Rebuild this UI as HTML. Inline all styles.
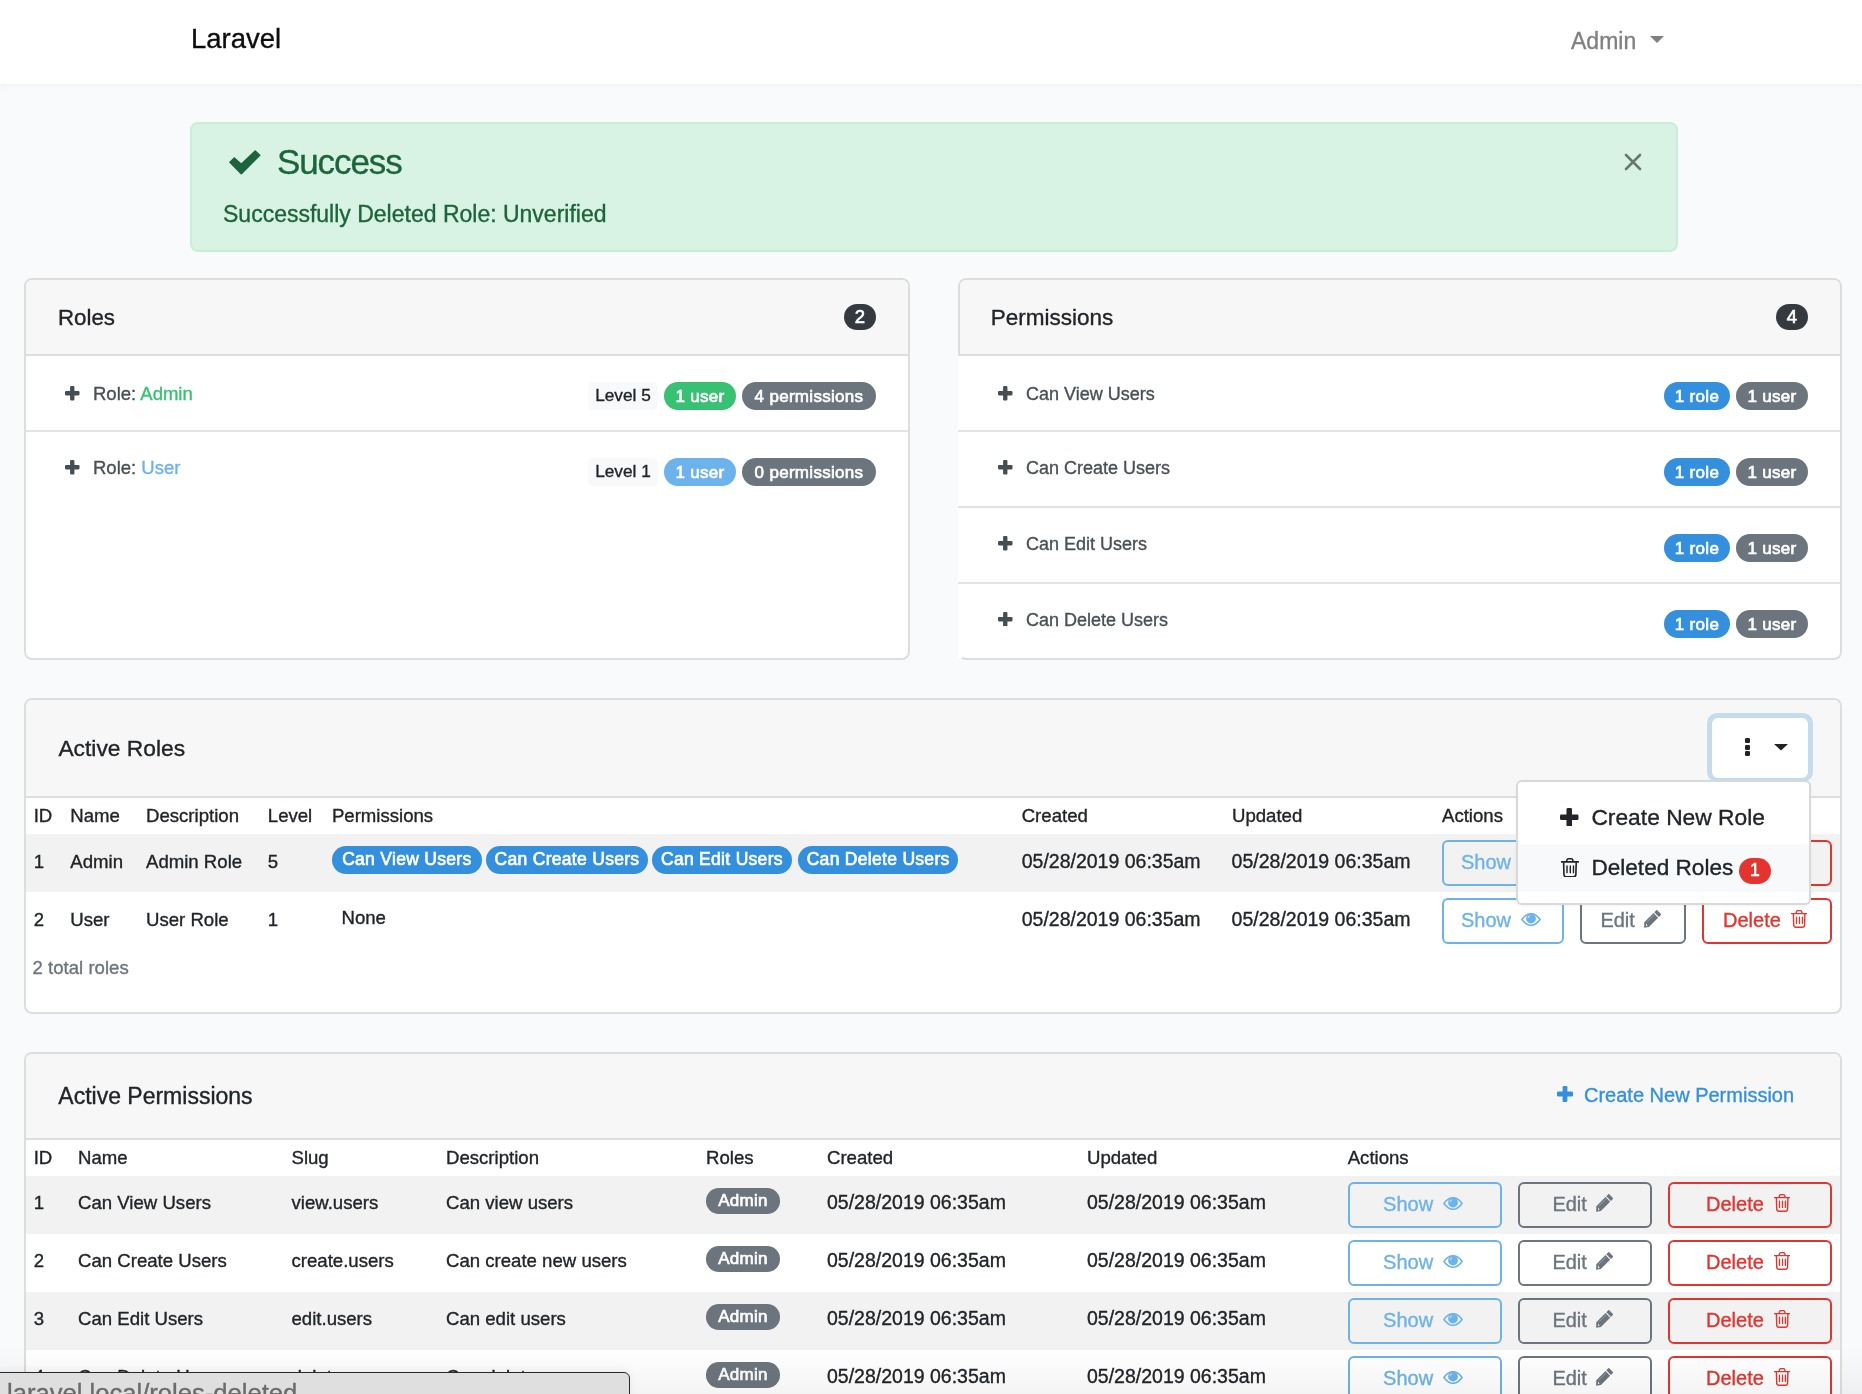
<!DOCTYPE html>
<html><head><meta charset="utf-8"><title>Laravel</title>
<style>
html,body{margin:0;padding:0;}
body{width:1862px;height:1394px;overflow:hidden;position:relative;background:#f8fafc;font-family:"Liberation Sans", sans-serif;}
.t{position:absolute;line-height:1;white-space:nowrap;-webkit-text-stroke:0.35px currentColor;}
#root{position:absolute;left:0;top:0;width:1862px;height:1394px;will-change:transform;}
.b{position:absolute;}
.cb{position:absolute;display:flex;align-items:center;justify-content:center;line-height:1;white-space:nowrap;box-sizing:border-box;}
</style></head><body><div id="root">
<div class="b" style="left:0.0px;top:0.0px;width:1862.0px;height:84.0px;background:#fff;box-shadow:0 2px 4px rgba(0,0,0,.04);"></div><div class="t" style="left:191.0px;top:24.7px;font-size:27.5px;color:#0d0d0d;font-weight:400;">Laravel</div><div class="t" style="left:1571.0px;top:29.5px;font-size:23px;color:#808080;font-weight:400;">Admin</div><svg class="b" style="left:1650.0px;top:36.0px;" width="14" height="7" viewBox="0 0 14 7"><path d="M0 0 H14 L7.0 7 Z" fill="#808080"/></svg><div class="b" style="left:190.0px;top:122.0px;width:1488.0px;height:130.0px;background:#d8f3e4;border:2px solid #c6eed8;border-radius:8px;box-sizing:border-box;"></div><svg class="b" style="left:228.0px;top:149.0px;" width="34" height="27" viewBox="0 0 34 27"><path d="M6.3 9.1 L13.3 15.3 L27.2 2 L31.7 6.3 L13.3 24.6 L2 13.3 Z" fill="#1d643b" stroke="#1d643b" stroke-width="1.6" stroke-linejoin="round"/></svg><div class="t" style="left:277.0px;top:144.4px;font-size:35px;color:#1d643b;font-weight:400;letter-spacing:-1.1px;">Success</div><div class="t" style="left:223.0px;top:202.5px;font-size:23px;color:#1d643b;font-weight:400;">Successfully Deleted Role: Unverified</div><svg class="b" style="left:1624.0px;top:153.0px;" width="18" height="18" viewBox="0 0 18 18"><path d="M2 2 L16 16 M16 2 L2 16" stroke="#69786f" stroke-width="2.6" stroke-linecap="round"/></svg><div class="b" style="left:24.0px;top:278.0px;width:886.0px;height:382.0px;background:#fff;border:2px solid #dcdddd;border-radius:8px;box-sizing:border-box;overflow:hidden;"><div style="position:absolute;left:0;top:0;right:0;height:74px;background:#f7f7f7;border-bottom:2px solid #dcdddd;"></div><div style="position:absolute;left:0;top:149.5px;right:0;height:2px;background:#e3e3e3;"></div></div><div class="t" style="left:58.0px;top:306.8px;font-size:22.3px;color:#212529;font-weight:400;">Roles</div><div class="cb" style="left:844.0px;top:304.0px;width:32.0px;height:26.0px;background:#343a40;color:#fff;border-radius:13.0px;font-size:18.54px;font-weight:400;-webkit-text-stroke:0.65px currentColor;letter-spacing:0.3px;">2</div><svg class="b" style="left:65.0px;top:386.0px;" width="14.5" height="14.5" viewBox="0 0 14.5 14.5"><rect x="5.08" y="0" width="4.35" height="14.5" rx="1.09" fill="#454d55"/><rect x="0" y="5.08" width="14.5" height="4.35" rx="1.09" fill="#454d55"/></svg><div class="t" style="left:93.0px;top:384.6px;font-size:18.5px;color:#495057;font-weight:400;">Role: <span style="color:#38c172">Admin</span></div><div class="cb" style="left:588.0px;top:382.0px;width:70.0px;height:28.0px;background:#f8f9fa;color:#212529;border-radius:5px;font-size:17.3px;font-weight:400;-webkit-text-stroke:0.35px currentColor;">Level 5</div><div class="cb" style="left:664.0px;top:382.0px;width:72.0px;height:28.0px;background:#38c172;color:#fff;border-radius:14.0px;font-size:17.00px;font-weight:400;-webkit-text-stroke:0.65px currentColor;letter-spacing:0.3px;">1 user</div><div class="cb" style="left:742.0px;top:382.0px;width:134.0px;height:28.0px;background:#6c757d;color:#fff;border-radius:14.0px;font-size:17.00px;font-weight:400;-webkit-text-stroke:0.65px currentColor;letter-spacing:0.3px;">4 permissions</div><svg class="b" style="left:65.0px;top:460.0px;" width="14.5" height="14.5" viewBox="0 0 14.5 14.5"><rect x="5.08" y="0" width="4.35" height="14.5" rx="1.09" fill="#454d55"/><rect x="0" y="5.08" width="14.5" height="4.35" rx="1.09" fill="#454d55"/></svg><div class="t" style="left:93.0px;top:458.6px;font-size:18.5px;color:#495057;font-weight:400;">Role: <span style="color:#6cb2eb">User</span></div><div class="cb" style="left:588.0px;top:458.0px;width:70.0px;height:28.0px;background:#f8f9fa;color:#212529;border-radius:5px;font-size:17.3px;font-weight:400;-webkit-text-stroke:0.35px currentColor;">Level 1</div><div class="cb" style="left:664.0px;top:458.0px;width:72.0px;height:28.0px;background:#6cb2eb;color:#fff;border-radius:14.0px;font-size:17.00px;font-weight:400;-webkit-text-stroke:0.65px currentColor;letter-spacing:0.3px;">1 user</div><div class="cb" style="left:742.0px;top:458.0px;width:134.0px;height:28.0px;background:#6c757d;color:#fff;border-radius:14.0px;font-size:17.00px;font-weight:400;-webkit-text-stroke:0.65px currentColor;letter-spacing:0.3px;">0 permissions</div><div class="b" style="left:958.0px;top:278.0px;width:884.0px;height:382.0px;background:#fff;border:2px solid #dcdddd;border-radius:8px;box-sizing:border-box;overflow:hidden;"><div style="position:absolute;left:0;top:0;right:0;height:74px;background:#f7f7f7;border-bottom:2px solid #dcdddd;"></div></div><div class="b" style="left:958.0px;top:356.0px;width:4.0px;height:302.0px;background:#fff;"></div><div class="t" style="left:990.8px;top:306.7px;font-size:22.5px;color:#212529;font-weight:400;">Permissions</div><div class="cb" style="left:1776.0px;top:304.0px;width:32.0px;height:26.0px;background:#343a40;color:#fff;border-radius:13.0px;font-size:18.54px;font-weight:400;-webkit-text-stroke:0.65px currentColor;letter-spacing:0.3px;">4</div><svg class="b" style="left:998.0px;top:386.0px;" width="14.5" height="14.5" viewBox="0 0 14.5 14.5"><rect x="5.08" y="0" width="4.35" height="14.5" rx="1.09" fill="#454d55"/><rect x="0" y="5.08" width="14.5" height="4.35" rx="1.09" fill="#454d55"/></svg><div class="t" style="left:1026.0px;top:385.1px;font-size:18px;color:#495057;font-weight:400;">Can View Users</div><div class="cb" style="left:1664.0px;top:382.0px;width:66.0px;height:28.0px;background:#3490dc;color:#fff;border-radius:14.0px;font-size:17.00px;font-weight:400;-webkit-text-stroke:0.65px currentColor;letter-spacing:0.3px;">1 role</div><div class="cb" style="left:1736.0px;top:382.0px;width:72.0px;height:28.0px;background:#6c757d;color:#fff;border-radius:14.0px;font-size:17.00px;font-weight:400;-webkit-text-stroke:0.65px currentColor;letter-spacing:0.3px;">1 user</div><div class="b" style="left:958.0px;top:430.0px;width:882.0px;height:2.0px;background:#e3e3e3;"></div><svg class="b" style="left:998.0px;top:460.0px;" width="14.5" height="14.5" viewBox="0 0 14.5 14.5"><rect x="5.08" y="0" width="4.35" height="14.5" rx="1.09" fill="#454d55"/><rect x="0" y="5.08" width="14.5" height="4.35" rx="1.09" fill="#454d55"/></svg><div class="t" style="left:1026.0px;top:459.1px;font-size:18px;color:#495057;font-weight:400;">Can Create Users</div><div class="cb" style="left:1664.0px;top:458.0px;width:66.0px;height:28.0px;background:#3490dc;color:#fff;border-radius:14.0px;font-size:17.00px;font-weight:400;-webkit-text-stroke:0.65px currentColor;letter-spacing:0.3px;">1 role</div><div class="cb" style="left:1736.0px;top:458.0px;width:72.0px;height:28.0px;background:#6c757d;color:#fff;border-radius:14.0px;font-size:17.00px;font-weight:400;-webkit-text-stroke:0.65px currentColor;letter-spacing:0.3px;">1 user</div><div class="b" style="left:958.0px;top:506.0px;width:882.0px;height:2.0px;background:#e3e3e3;"></div><svg class="b" style="left:998.0px;top:536.0px;" width="14.5" height="14.5" viewBox="0 0 14.5 14.5"><rect x="5.08" y="0" width="4.35" height="14.5" rx="1.09" fill="#454d55"/><rect x="0" y="5.08" width="14.5" height="4.35" rx="1.09" fill="#454d55"/></svg><div class="t" style="left:1026.0px;top:535.1px;font-size:18px;color:#495057;font-weight:400;">Can Edit Users</div><div class="cb" style="left:1664.0px;top:534.0px;width:66.0px;height:28.0px;background:#3490dc;color:#fff;border-radius:14.0px;font-size:17.00px;font-weight:400;-webkit-text-stroke:0.65px currentColor;letter-spacing:0.3px;">1 role</div><div class="cb" style="left:1736.0px;top:534.0px;width:72.0px;height:28.0px;background:#6c757d;color:#fff;border-radius:14.0px;font-size:17.00px;font-weight:400;-webkit-text-stroke:0.65px currentColor;letter-spacing:0.3px;">1 user</div><div class="b" style="left:958.0px;top:582.0px;width:882.0px;height:2.0px;background:#e3e3e3;"></div><svg class="b" style="left:998.0px;top:611.7px;" width="14.5" height="14.5" viewBox="0 0 14.5 14.5"><rect x="5.08" y="0" width="4.35" height="14.5" rx="1.09" fill="#454d55"/><rect x="0" y="5.08" width="14.5" height="4.35" rx="1.09" fill="#454d55"/></svg><div class="t" style="left:1026.0px;top:610.8px;font-size:18px;color:#495057;font-weight:400;">Can Delete Users</div><div class="cb" style="left:1664.0px;top:610.0px;width:66.0px;height:28.0px;background:#3490dc;color:#fff;border-radius:14.0px;font-size:17.00px;font-weight:400;-webkit-text-stroke:0.65px currentColor;letter-spacing:0.3px;">1 role</div><div class="cb" style="left:1736.0px;top:610.0px;width:72.0px;height:28.0px;background:#6c757d;color:#fff;border-radius:14.0px;font-size:17.00px;font-weight:400;-webkit-text-stroke:0.65px currentColor;letter-spacing:0.3px;">1 user</div><div class="b" style="left:24.0px;top:698.0px;width:1818.0px;height:316.0px;background:#fff;border:2px solid #dcdddd;border-radius:8px;box-sizing:border-box;overflow:hidden;"><div style="position:absolute;left:0;top:0;right:0;height:96px;background:#f7f7f7;border-bottom:2px solid #dcdddd;"></div><div style="position:absolute;left:0;top:134px;right:0;height:58px;background:#f2f2f2;"></div></div><div class="t" style="left:58.4px;top:736.7px;font-size:22.8px;color:#212529;font-weight:400;">Active Roles</div><div class="t" style="left:33.7px;top:806.6px;font-size:18.6px;color:#212529;font-weight:400;">ID</div><div class="t" style="left:70.3px;top:806.6px;font-size:18.6px;color:#212529;font-weight:400;">Name</div><div class="t" style="left:146.0px;top:806.6px;font-size:18.6px;color:#212529;font-weight:400;">Description</div><div class="t" style="left:267.8px;top:806.6px;font-size:18.6px;color:#212529;font-weight:400;">Level</div><div class="t" style="left:331.9px;top:806.6px;font-size:18.6px;color:#212529;font-weight:400;">Permissions</div><div class="t" style="left:1021.7px;top:806.6px;font-size:18.6px;color:#212529;font-weight:400;">Created</div><div class="t" style="left:1232.0px;top:806.6px;font-size:18.6px;color:#212529;font-weight:400;">Updated</div><div class="t" style="left:1442.0px;top:806.6px;font-size:18.6px;color:#212529;font-weight:400;">Actions</div><div class="t" style="left:33.7px;top:852.5px;font-size:18.6px;color:#212529;font-weight:400;">1</div><div class="t" style="left:70.3px;top:852.5px;font-size:18.6px;color:#212529;font-weight:400;">Admin</div><div class="t" style="left:146.0px;top:852.5px;font-size:18.6px;color:#212529;font-weight:400;">Admin Role</div><div class="t" style="left:267.8px;top:852.5px;font-size:18.6px;color:#212529;font-weight:400;">5</div><div class="t" style="left:1021.7px;top:851.7px;font-size:19.5px;color:#212529;font-weight:400;">05/28/2019 06:35am</div><div class="t" style="left:1231.6px;top:851.7px;font-size:19.5px;color:#212529;font-weight:400;">05/28/2019 06:35am</div><div class="b" style="left:1442.3px;top:840.0px;width:121.4px;height:45.5px;border:2px solid #6cb2eb;border-radius:6px;box-sizing:border-box;"></div><div class="t" style="left:1461.0px;top:851.6px;font-size:20px;color:#6cb2eb;font-weight:400;">Show</div><svg class="b" style="left:1521.0px;top:854.5px;" width="20" height="13" viewBox="0 0 20 13"><path d="M0.9 6.5 C4.2 1.9 7 0.7 10 0.7 C13 0.7 15.8 1.9 19.1 6.5 C15.8 11.1 13 12.3 10 12.3 C7 12.3 4.2 11.1 0.9 6.5 Z" fill="none" stroke="#6cb2eb" stroke-width="1.5"/><circle cx="10" cy="5.6" r="4.9" fill="#6cb2eb"/><path d="M6.9 5.2 Q7.3 3.2 9.2 2.8" stroke="#fff" stroke-width="0.9" fill="none" opacity="0.85"/></svg><div class="b" style="left:1580.0px;top:840.0px;width:105.8px;height:45.5px;border:2px solid #6c757d;border-radius:6px;box-sizing:border-box;"></div><div class="t" style="left:1600.4px;top:851.6px;font-size:20px;color:#6c757d;font-weight:400;">Edit</div><svg class="b" style="left:1643.8px;top:851.7px;" width="17" height="18" viewBox="0 0 17 18"><path d="M10.3 2.3 L12.3 0.3 Q12.8 -0.2 13.3 0.3 L16.9 3.9 Q17.4 4.4 16.9 4.9 L14.9 6.9 Z" fill="#6c757d"/><path d="M9.5 3.1 L14.1 7.7 L4.9 16.9 L0.1 17.8 L0.3 12.3 Z" fill="#6c757d"/><path d="M1.8 13.6 L3.6 15.4 L2.3 16.2 Z" fill="#f2f2f2"/><path d="M2.6 12.2 L9.8 5" stroke="#f2f2f2" stroke-width="0.5" opacity="0.6"/></svg><div class="b" style="left:1702.2px;top:840.0px;width:129.5px;height:45.5px;border:2px solid #e3342f;border-radius:6px;box-sizing:border-box;"></div><div class="t" style="left:1723.0px;top:851.6px;font-size:20px;color:#e3342f;font-weight:400;">Delete</div><svg class="b" style="left:1790.5px;top:851.9px;" width="16" height="18" viewBox="0 0 16 18"><path d="M0.4 3.6 H15.8" stroke="#e3342f" stroke-width="1.4" fill="none" stroke-linecap="round"/><path d="M5 3.5 L5.5 1.6 Q5.8 0.7 6.8 0.7 H9.4 Q10.4 0.7 10.7 1.6 L11.2 3.5" stroke="#e3342f" stroke-width="1.33" fill="none"/><path d="M2.4 3.8 L2.7 15 Q2.8 17.2 5 17.2 H11.3 Q13.5 17.2 13.6 15 L13.9 3.8" stroke="#e3342f" stroke-width="1.4" fill="none"/><path d="M5.5 7.2 V13.4 M8.5 7.2 V13.4 M11.4 7.2 V13.4" stroke="#e3342f" stroke-width="1.3" fill="none" stroke-linecap="round"/></svg><div class="t" style="left:33.7px;top:910.5px;font-size:18.6px;color:#212529;font-weight:400;">2</div><div class="t" style="left:70.3px;top:910.5px;font-size:18.6px;color:#212529;font-weight:400;">User</div><div class="t" style="left:146.0px;top:910.5px;font-size:18.6px;color:#212529;font-weight:400;">User Role</div><div class="t" style="left:267.8px;top:910.5px;font-size:18.6px;color:#212529;font-weight:400;">1</div><div class="t" style="left:1021.7px;top:909.7px;font-size:19.5px;color:#212529;font-weight:400;">05/28/2019 06:35am</div><div class="t" style="left:1231.6px;top:909.7px;font-size:19.5px;color:#212529;font-weight:400;">05/28/2019 06:35am</div><div class="b" style="left:1442.3px;top:898.0px;width:121.4px;height:45.5px;border:2px solid #6cb2eb;border-radius:6px;box-sizing:border-box;"></div><div class="t" style="left:1461.0px;top:909.6px;font-size:20px;color:#6cb2eb;font-weight:400;">Show</div><svg class="b" style="left:1521.0px;top:912.5px;" width="20" height="13" viewBox="0 0 20 13"><path d="M0.9 6.5 C4.2 1.9 7 0.7 10 0.7 C13 0.7 15.8 1.9 19.1 6.5 C15.8 11.1 13 12.3 10 12.3 C7 12.3 4.2 11.1 0.9 6.5 Z" fill="none" stroke="#6cb2eb" stroke-width="1.5"/><circle cx="10" cy="5.6" r="4.9" fill="#6cb2eb"/><path d="M6.9 5.2 Q7.3 3.2 9.2 2.8" stroke="#fff" stroke-width="0.9" fill="none" opacity="0.85"/></svg><div class="b" style="left:1580.0px;top:898.0px;width:105.8px;height:45.5px;border:2px solid #6c757d;border-radius:6px;box-sizing:border-box;"></div><div class="t" style="left:1600.4px;top:909.6px;font-size:20px;color:#6c757d;font-weight:400;">Edit</div><svg class="b" style="left:1643.8px;top:909.7px;" width="17" height="18" viewBox="0 0 17 18"><path d="M10.3 2.3 L12.3 0.3 Q12.8 -0.2 13.3 0.3 L16.9 3.9 Q17.4 4.4 16.9 4.9 L14.9 6.9 Z" fill="#6c757d"/><path d="M9.5 3.1 L14.1 7.7 L4.9 16.9 L0.1 17.8 L0.3 12.3 Z" fill="#6c757d"/><path d="M1.8 13.6 L3.6 15.4 L2.3 16.2 Z" fill="#fff"/><path d="M2.6 12.2 L9.8 5" stroke="#fff" stroke-width="0.5" opacity="0.6"/></svg><div class="b" style="left:1702.2px;top:898.0px;width:129.5px;height:45.5px;border:2px solid #e3342f;border-radius:6px;box-sizing:border-box;"></div><div class="t" style="left:1723.0px;top:909.6px;font-size:20px;color:#e3342f;font-weight:400;">Delete</div><svg class="b" style="left:1790.5px;top:909.9px;" width="16" height="18" viewBox="0 0 16 18"><path d="M0.4 3.6 H15.8" stroke="#e3342f" stroke-width="1.4" fill="none" stroke-linecap="round"/><path d="M5 3.5 L5.5 1.6 Q5.8 0.7 6.8 0.7 H9.4 Q10.4 0.7 10.7 1.6 L11.2 3.5" stroke="#e3342f" stroke-width="1.33" fill="none"/><path d="M2.4 3.8 L2.7 15 Q2.8 17.2 5 17.2 H11.3 Q13.5 17.2 13.6 15 L13.9 3.8" stroke="#e3342f" stroke-width="1.4" fill="none"/><path d="M5.5 7.2 V13.4 M8.5 7.2 V13.4 M11.4 7.2 V13.4" stroke="#e3342f" stroke-width="1.3" fill="none" stroke-linecap="round"/></svg><div class="cb" style="left:332.0px;top:846.0px;width:149.6px;height:28.0px;background:#3490dc;color:#fff;border-radius:14.0px;font-size:17.51px;font-weight:400;-webkit-text-stroke:0.65px currentColor;letter-spacing:0.3px;">Can View Users</div><div class="cb" style="left:486.2px;top:846.0px;width:161.6px;height:28.0px;background:#3490dc;color:#fff;border-radius:14.0px;font-size:17.51px;font-weight:400;-webkit-text-stroke:0.65px currentColor;letter-spacing:0.3px;">Can Create Users</div><div class="cb" style="left:652.0px;top:846.0px;width:139.8px;height:28.0px;background:#3490dc;color:#fff;border-radius:14.0px;font-size:17.51px;font-weight:400;-webkit-text-stroke:0.65px currentColor;letter-spacing:0.3px;">Can Edit Users</div><div class="cb" style="left:798.2px;top:846.0px;width:159.9px;height:28.0px;background:#3490dc;color:#fff;border-radius:14.0px;font-size:17.51px;font-weight:400;-webkit-text-stroke:0.65px currentColor;letter-spacing:0.3px;">Can Delete Users</div><div class="t" style="left:341.5px;top:909.3px;font-size:18.6px;color:#212529;font-weight:400;">None</div><div class="t" style="left:32.6px;top:958.5px;font-size:18.6px;color:#6c757d;font-weight:400;">2 total roles</div><div class="b" style="left:1707.0px;top:713.0px;width:106.0px;height:69.0px;background:#c5dbee;border-radius:10px;"></div><div class="b" style="left:1712.0px;top:717.7px;width:96.0px;height:60.5px;background:#fff;border-radius:6px;"></div><div class="b" style="left:1744.7px;top:738.0px;width:5.2px;height:5.2px;background:#222;border-radius:1.2px;"></div><div class="b" style="left:1744.7px;top:744.6px;width:5.2px;height:5.2px;background:#222;border-radius:1.2px;"></div><div class="b" style="left:1744.7px;top:751.2px;width:5.2px;height:5.2px;background:#222;border-radius:1.2px;"></div><svg class="b" style="left:1774.2px;top:744.0px;" width="14" height="6.5" viewBox="0 0 14 6.5"><path d="M0 0 H14 L7.0 6.5 Z" fill="#222"/></svg><div class="b" style="left:1516.0px;top:780.0px;width:294.5px;height:124.5px;background:#fff;border:2px solid rgba(0,0,0,.15);border-radius:6px;box-sizing:border-box;box-shadow:0 1px 3px rgba(0,0,0,.05);overflow:hidden;"><div style="position:absolute;left:0;right:0;top:61.5px;height:48px;background:#f8f9fa;"></div></div><svg class="b" style="left:1560.0px;top:807.5px;" width="18.5" height="18.5" viewBox="0 0 18.5 18.5"><rect x="6.47" y="0" width="5.55" height="18.5" rx="1.39" fill="#212529"/><rect x="0" y="6.47" width="18.5" height="5.55" rx="1.39" fill="#212529"/></svg><div class="t" style="left:1591.4px;top:806.3px;font-size:22.8px;color:#212529;font-weight:400;">Create New Role</div><svg class="b" style="left:1561.0px;top:857.5px;" width="17.5" height="19.7" viewBox="0 0 16 18"><path d="M0.4 3.6 H15.8" stroke="#212529" stroke-width="1.5" fill="none" stroke-linecap="round"/><path d="M5 3.5 L5.5 1.6 Q5.8 0.7 6.8 0.7 H9.4 Q10.4 0.7 10.7 1.6 L11.2 3.5" stroke="#212529" stroke-width="1.42" fill="none"/><path d="M2.4 3.8 L2.7 15 Q2.8 17.2 5 17.2 H11.3 Q13.5 17.2 13.6 15 L13.9 3.8" stroke="#212529" stroke-width="1.5" fill="none"/><path d="M5.5 7.2 V13.4 M8.5 7.2 V13.4 M11.4 7.2 V13.4" stroke="#212529" stroke-width="1.3" fill="none" stroke-linecap="round"/></svg><div class="t" style="left:1591.4px;top:856.7px;font-size:22.6px;color:#212529;font-weight:400;">Deleted Roles</div><div class="cb" style="left:1739.0px;top:858.0px;width:32.0px;height:26.0px;background:#e3342f;color:#fff;border-radius:13.0px;font-size:17.51px;font-weight:400;-webkit-text-stroke:0.65px currentColor;letter-spacing:0.3px;">1</div><div class="b" style="left:24.0px;top:1052.0px;width:1818.0px;height:448.0px;background:#fff;border:2px solid #dcdddd;border-radius:8px;box-sizing:border-box;overflow:hidden;"><div style="position:absolute;left:0;top:0;right:0;height:84px;background:#f7f7f7;border-bottom:2px solid #dcdddd;"></div><div style="position:absolute;left:0;top:122px;right:0;height:58px;background:#f2f2f2;"></div><div style="position:absolute;left:0;top:238px;right:0;height:58px;background:#f2f2f2;"></div></div><div class="t" style="left:58.3px;top:1085.3px;font-size:23px;color:#212529;font-weight:400;">Active Permissions</div><svg class="b" style="left:1557.0px;top:1086.3px;" width="16" height="16" viewBox="0 0 16 16"><rect x="5.60" y="0" width="4.80" height="16" rx="1.20" fill="#3490dc"/><rect x="0" y="5.60" width="16" height="4.80" rx="1.20" fill="#3490dc"/></svg><div class="t" style="left:1584.0px;top:1085.1px;font-size:20px;color:#3490dc;font-weight:400;">Create New Permission</div><div class="t" style="left:33.7px;top:1148.8px;font-size:18.6px;color:#212529;font-weight:400;">ID</div><div class="t" style="left:78.0px;top:1148.8px;font-size:18.6px;color:#212529;font-weight:400;">Name</div><div class="t" style="left:291.5px;top:1148.8px;font-size:18.6px;color:#212529;font-weight:400;">Slug</div><div class="t" style="left:446.0px;top:1148.8px;font-size:18.6px;color:#212529;font-weight:400;">Description</div><div class="t" style="left:706.0px;top:1148.8px;font-size:18.6px;color:#212529;font-weight:400;">Roles</div><div class="t" style="left:827.0px;top:1148.8px;font-size:18.6px;color:#212529;font-weight:400;">Created</div><div class="t" style="left:1087.0px;top:1148.8px;font-size:18.6px;color:#212529;font-weight:400;">Updated</div><div class="t" style="left:1347.7px;top:1148.8px;font-size:18.6px;color:#212529;font-weight:400;">Actions</div><div class="t" style="left:33.7px;top:1194.1px;font-size:18.6px;color:#212529;font-weight:400;">1</div><div class="t" style="left:78.0px;top:1194.1px;font-size:18.6px;color:#212529;font-weight:400;">Can View Users</div><div class="t" style="left:291.5px;top:1194.1px;font-size:18.6px;color:#212529;font-weight:400;">view.users</div><div class="t" style="left:446.0px;top:1194.1px;font-size:18.6px;color:#212529;font-weight:400;">Can view users</div><div class="cb" style="left:706.0px;top:1188.0px;width:74.0px;height:25.6px;background:#6c757d;color:#fff;border-radius:12.799999999999955px;font-size:17.00px;font-weight:400;-webkit-text-stroke:0.65px currentColor;letter-spacing:0.3px;">Admin</div><div class="t" style="left:827.0px;top:1193.3px;font-size:19.5px;color:#212529;font-weight:400;">05/28/2019 06:35am</div><div class="t" style="left:1087.0px;top:1193.3px;font-size:19.5px;color:#212529;font-weight:400;">05/28/2019 06:35am</div><div class="b" style="left:1348.2px;top:1182.2px;width:153.7px;height:45.5px;border:2px solid #6cb2eb;border-radius:6px;box-sizing:border-box;"></div><div class="t" style="left:1383.1px;top:1193.7px;font-size:20px;color:#6cb2eb;font-weight:400;">Show</div><svg class="b" style="left:1443.1px;top:1196.6px;" width="20" height="13" viewBox="0 0 20 13"><path d="M0.9 6.5 C4.2 1.9 7 0.7 10 0.7 C13 0.7 15.8 1.9 19.1 6.5 C15.8 11.1 13 12.3 10 12.3 C7 12.3 4.2 11.1 0.9 6.5 Z" fill="none" stroke="#6cb2eb" stroke-width="1.5"/><circle cx="10" cy="5.6" r="4.9" fill="#6cb2eb"/><path d="M6.9 5.2 Q7.3 3.2 9.2 2.8" stroke="#fff" stroke-width="0.9" fill="none" opacity="0.85"/></svg><div class="b" style="left:1518.2px;top:1182.2px;width:133.4px;height:45.5px;border:2px solid #6c757d;border-radius:6px;box-sizing:border-box;"></div><div class="t" style="left:1552.4px;top:1193.7px;font-size:20px;color:#6c757d;font-weight:400;">Edit</div><svg class="b" style="left:1595.8px;top:1193.8px;" width="17" height="18" viewBox="0 0 17 18"><path d="M10.3 2.3 L12.3 0.3 Q12.8 -0.2 13.3 0.3 L16.9 3.9 Q17.4 4.4 16.9 4.9 L14.9 6.9 Z" fill="#6c757d"/><path d="M9.5 3.1 L14.1 7.7 L4.9 16.9 L0.1 17.8 L0.3 12.3 Z" fill="#6c757d"/><path d="M1.8 13.6 L3.6 15.4 L2.3 16.2 Z" fill="#f2f2f2"/><path d="M2.6 12.2 L9.8 5" stroke="#f2f2f2" stroke-width="0.5" opacity="0.6"/></svg><div class="b" style="left:1668.2px;top:1182.2px;width:163.5px;height:45.5px;border:2px solid #e3342f;border-radius:6px;box-sizing:border-box;"></div><div class="t" style="left:1706.0px;top:1193.7px;font-size:20px;color:#e3342f;font-weight:400;">Delete</div><svg class="b" style="left:1773.5px;top:1194.0px;" width="16" height="18" viewBox="0 0 16 18"><path d="M0.4 3.6 H15.8" stroke="#e3342f" stroke-width="1.4" fill="none" stroke-linecap="round"/><path d="M5 3.5 L5.5 1.6 Q5.8 0.7 6.8 0.7 H9.4 Q10.4 0.7 10.7 1.6 L11.2 3.5" stroke="#e3342f" stroke-width="1.33" fill="none"/><path d="M2.4 3.8 L2.7 15 Q2.8 17.2 5 17.2 H11.3 Q13.5 17.2 13.6 15 L13.9 3.8" stroke="#e3342f" stroke-width="1.4" fill="none"/><path d="M5.5 7.2 V13.4 M8.5 7.2 V13.4 M11.4 7.2 V13.4" stroke="#e3342f" stroke-width="1.3" fill="none" stroke-linecap="round"/></svg><div class="t" style="left:33.7px;top:1252.1px;font-size:18.6px;color:#212529;font-weight:400;">2</div><div class="t" style="left:78.0px;top:1252.1px;font-size:18.6px;color:#212529;font-weight:400;">Can Create Users</div><div class="t" style="left:291.5px;top:1252.1px;font-size:18.6px;color:#212529;font-weight:400;">create.users</div><div class="t" style="left:446.0px;top:1252.1px;font-size:18.6px;color:#212529;font-weight:400;">Can create new users</div><div class="cb" style="left:706.0px;top:1246.0px;width:74.0px;height:25.6px;background:#6c757d;color:#fff;border-radius:12.799999999999955px;font-size:17.00px;font-weight:400;-webkit-text-stroke:0.65px currentColor;letter-spacing:0.3px;">Admin</div><div class="t" style="left:827.0px;top:1251.3px;font-size:19.5px;color:#212529;font-weight:400;">05/28/2019 06:35am</div><div class="t" style="left:1087.0px;top:1251.3px;font-size:19.5px;color:#212529;font-weight:400;">05/28/2019 06:35am</div><div class="b" style="left:1348.2px;top:1240.2px;width:153.7px;height:45.5px;border:2px solid #6cb2eb;border-radius:6px;box-sizing:border-box;"></div><div class="t" style="left:1383.1px;top:1251.7px;font-size:20px;color:#6cb2eb;font-weight:400;">Show</div><svg class="b" style="left:1443.1px;top:1254.6px;" width="20" height="13" viewBox="0 0 20 13"><path d="M0.9 6.5 C4.2 1.9 7 0.7 10 0.7 C13 0.7 15.8 1.9 19.1 6.5 C15.8 11.1 13 12.3 10 12.3 C7 12.3 4.2 11.1 0.9 6.5 Z" fill="none" stroke="#6cb2eb" stroke-width="1.5"/><circle cx="10" cy="5.6" r="4.9" fill="#6cb2eb"/><path d="M6.9 5.2 Q7.3 3.2 9.2 2.8" stroke="#fff" stroke-width="0.9" fill="none" opacity="0.85"/></svg><div class="b" style="left:1518.2px;top:1240.2px;width:133.4px;height:45.5px;border:2px solid #6c757d;border-radius:6px;box-sizing:border-box;"></div><div class="t" style="left:1552.4px;top:1251.7px;font-size:20px;color:#6c757d;font-weight:400;">Edit</div><svg class="b" style="left:1595.8px;top:1251.8px;" width="17" height="18" viewBox="0 0 17 18"><path d="M10.3 2.3 L12.3 0.3 Q12.8 -0.2 13.3 0.3 L16.9 3.9 Q17.4 4.4 16.9 4.9 L14.9 6.9 Z" fill="#6c757d"/><path d="M9.5 3.1 L14.1 7.7 L4.9 16.9 L0.1 17.8 L0.3 12.3 Z" fill="#6c757d"/><path d="M1.8 13.6 L3.6 15.4 L2.3 16.2 Z" fill="#fff"/><path d="M2.6 12.2 L9.8 5" stroke="#fff" stroke-width="0.5" opacity="0.6"/></svg><div class="b" style="left:1668.2px;top:1240.2px;width:163.5px;height:45.5px;border:2px solid #e3342f;border-radius:6px;box-sizing:border-box;"></div><div class="t" style="left:1706.0px;top:1251.7px;font-size:20px;color:#e3342f;font-weight:400;">Delete</div><svg class="b" style="left:1773.5px;top:1252.0px;" width="16" height="18" viewBox="0 0 16 18"><path d="M0.4 3.6 H15.8" stroke="#e3342f" stroke-width="1.4" fill="none" stroke-linecap="round"/><path d="M5 3.5 L5.5 1.6 Q5.8 0.7 6.8 0.7 H9.4 Q10.4 0.7 10.7 1.6 L11.2 3.5" stroke="#e3342f" stroke-width="1.33" fill="none"/><path d="M2.4 3.8 L2.7 15 Q2.8 17.2 5 17.2 H11.3 Q13.5 17.2 13.6 15 L13.9 3.8" stroke="#e3342f" stroke-width="1.4" fill="none"/><path d="M5.5 7.2 V13.4 M8.5 7.2 V13.4 M11.4 7.2 V13.4" stroke="#e3342f" stroke-width="1.3" fill="none" stroke-linecap="round"/></svg><div class="t" style="left:33.7px;top:1310.1px;font-size:18.6px;color:#212529;font-weight:400;">3</div><div class="t" style="left:78.0px;top:1310.1px;font-size:18.6px;color:#212529;font-weight:400;">Can Edit Users</div><div class="t" style="left:291.5px;top:1310.1px;font-size:18.6px;color:#212529;font-weight:400;">edit.users</div><div class="t" style="left:446.0px;top:1310.1px;font-size:18.6px;color:#212529;font-weight:400;">Can edit users</div><div class="cb" style="left:706.0px;top:1304.0px;width:74.0px;height:25.6px;background:#6c757d;color:#fff;border-radius:12.799999999999955px;font-size:17.00px;font-weight:400;-webkit-text-stroke:0.65px currentColor;letter-spacing:0.3px;">Admin</div><div class="t" style="left:827.0px;top:1309.3px;font-size:19.5px;color:#212529;font-weight:400;">05/28/2019 06:35am</div><div class="t" style="left:1087.0px;top:1309.3px;font-size:19.5px;color:#212529;font-weight:400;">05/28/2019 06:35am</div><div class="b" style="left:1348.2px;top:1298.2px;width:153.7px;height:45.5px;border:2px solid #6cb2eb;border-radius:6px;box-sizing:border-box;"></div><div class="t" style="left:1383.1px;top:1309.7px;font-size:20px;color:#6cb2eb;font-weight:400;">Show</div><svg class="b" style="left:1443.1px;top:1312.6px;" width="20" height="13" viewBox="0 0 20 13"><path d="M0.9 6.5 C4.2 1.9 7 0.7 10 0.7 C13 0.7 15.8 1.9 19.1 6.5 C15.8 11.1 13 12.3 10 12.3 C7 12.3 4.2 11.1 0.9 6.5 Z" fill="none" stroke="#6cb2eb" stroke-width="1.5"/><circle cx="10" cy="5.6" r="4.9" fill="#6cb2eb"/><path d="M6.9 5.2 Q7.3 3.2 9.2 2.8" stroke="#fff" stroke-width="0.9" fill="none" opacity="0.85"/></svg><div class="b" style="left:1518.2px;top:1298.2px;width:133.4px;height:45.5px;border:2px solid #6c757d;border-radius:6px;box-sizing:border-box;"></div><div class="t" style="left:1552.4px;top:1309.7px;font-size:20px;color:#6c757d;font-weight:400;">Edit</div><svg class="b" style="left:1595.8px;top:1309.8px;" width="17" height="18" viewBox="0 0 17 18"><path d="M10.3 2.3 L12.3 0.3 Q12.8 -0.2 13.3 0.3 L16.9 3.9 Q17.4 4.4 16.9 4.9 L14.9 6.9 Z" fill="#6c757d"/><path d="M9.5 3.1 L14.1 7.7 L4.9 16.9 L0.1 17.8 L0.3 12.3 Z" fill="#6c757d"/><path d="M1.8 13.6 L3.6 15.4 L2.3 16.2 Z" fill="#f2f2f2"/><path d="M2.6 12.2 L9.8 5" stroke="#f2f2f2" stroke-width="0.5" opacity="0.6"/></svg><div class="b" style="left:1668.2px;top:1298.2px;width:163.5px;height:45.5px;border:2px solid #e3342f;border-radius:6px;box-sizing:border-box;"></div><div class="t" style="left:1706.0px;top:1309.7px;font-size:20px;color:#e3342f;font-weight:400;">Delete</div><svg class="b" style="left:1773.5px;top:1310.0px;" width="16" height="18" viewBox="0 0 16 18"><path d="M0.4 3.6 H15.8" stroke="#e3342f" stroke-width="1.4" fill="none" stroke-linecap="round"/><path d="M5 3.5 L5.5 1.6 Q5.8 0.7 6.8 0.7 H9.4 Q10.4 0.7 10.7 1.6 L11.2 3.5" stroke="#e3342f" stroke-width="1.33" fill="none"/><path d="M2.4 3.8 L2.7 15 Q2.8 17.2 5 17.2 H11.3 Q13.5 17.2 13.6 15 L13.9 3.8" stroke="#e3342f" stroke-width="1.4" fill="none"/><path d="M5.5 7.2 V13.4 M8.5 7.2 V13.4 M11.4 7.2 V13.4" stroke="#e3342f" stroke-width="1.3" fill="none" stroke-linecap="round"/></svg><div class="t" style="left:33.7px;top:1368.1px;font-size:18.6px;color:#212529;font-weight:400;">4</div><div class="t" style="left:78.0px;top:1368.1px;font-size:18.6px;color:#212529;font-weight:400;">Can Delete Users</div><div class="t" style="left:291.5px;top:1368.1px;font-size:18.6px;color:#212529;font-weight:400;">delete.users</div><div class="t" style="left:446.0px;top:1368.1px;font-size:18.6px;color:#212529;font-weight:400;">Can delete users</div><div class="cb" style="left:706.0px;top:1362.0px;width:74.0px;height:25.6px;background:#6c757d;color:#fff;border-radius:12.799999999999955px;font-size:17.00px;font-weight:400;-webkit-text-stroke:0.65px currentColor;letter-spacing:0.3px;">Admin</div><div class="t" style="left:827.0px;top:1367.3px;font-size:19.5px;color:#212529;font-weight:400;">05/28/2019 06:35am</div><div class="t" style="left:1087.0px;top:1367.3px;font-size:19.5px;color:#212529;font-weight:400;">05/28/2019 06:35am</div><div class="b" style="left:1348.2px;top:1356.2px;width:153.7px;height:45.5px;border:2px solid #6cb2eb;border-radius:6px;box-sizing:border-box;"></div><div class="t" style="left:1383.1px;top:1367.7px;font-size:20px;color:#6cb2eb;font-weight:400;">Show</div><svg class="b" style="left:1443.1px;top:1370.6px;" width="20" height="13" viewBox="0 0 20 13"><path d="M0.9 6.5 C4.2 1.9 7 0.7 10 0.7 C13 0.7 15.8 1.9 19.1 6.5 C15.8 11.1 13 12.3 10 12.3 C7 12.3 4.2 11.1 0.9 6.5 Z" fill="none" stroke="#6cb2eb" stroke-width="1.5"/><circle cx="10" cy="5.6" r="4.9" fill="#6cb2eb"/><path d="M6.9 5.2 Q7.3 3.2 9.2 2.8" stroke="#fff" stroke-width="0.9" fill="none" opacity="0.85"/></svg><div class="b" style="left:1518.2px;top:1356.2px;width:133.4px;height:45.5px;border:2px solid #6c757d;border-radius:6px;box-sizing:border-box;"></div><div class="t" style="left:1552.4px;top:1367.7px;font-size:20px;color:#6c757d;font-weight:400;">Edit</div><svg class="b" style="left:1595.8px;top:1367.8px;" width="17" height="18" viewBox="0 0 17 18"><path d="M10.3 2.3 L12.3 0.3 Q12.8 -0.2 13.3 0.3 L16.9 3.9 Q17.4 4.4 16.9 4.9 L14.9 6.9 Z" fill="#6c757d"/><path d="M9.5 3.1 L14.1 7.7 L4.9 16.9 L0.1 17.8 L0.3 12.3 Z" fill="#6c757d"/><path d="M1.8 13.6 L3.6 15.4 L2.3 16.2 Z" fill="#fff"/><path d="M2.6 12.2 L9.8 5" stroke="#fff" stroke-width="0.5" opacity="0.6"/></svg><div class="b" style="left:1668.2px;top:1356.2px;width:163.5px;height:45.5px;border:2px solid #e3342f;border-radius:6px;box-sizing:border-box;"></div><div class="t" style="left:1706.0px;top:1367.7px;font-size:20px;color:#e3342f;font-weight:400;">Delete</div><svg class="b" style="left:1773.5px;top:1368.0px;" width="16" height="18" viewBox="0 0 16 18"><path d="M0.4 3.6 H15.8" stroke="#e3342f" stroke-width="1.4" fill="none" stroke-linecap="round"/><path d="M5 3.5 L5.5 1.6 Q5.8 0.7 6.8 0.7 H9.4 Q10.4 0.7 10.7 1.6 L11.2 3.5" stroke="#e3342f" stroke-width="1.33" fill="none"/><path d="M2.4 3.8 L2.7 15 Q2.8 17.2 5 17.2 H11.3 Q13.5 17.2 13.6 15 L13.9 3.8" stroke="#e3342f" stroke-width="1.4" fill="none"/><path d="M5.5 7.2 V13.4 M8.5 7.2 V13.4 M11.4 7.2 V13.4" stroke="#e3342f" stroke-width="1.3" fill="none" stroke-linecap="round"/></svg><div class="b" style="left:0.0px;top:1346.0px;width:1862.0px;height:48.0px;background:linear-gradient(to bottom, rgba(0,0,0,0), rgba(0,0,0,.045));"></div><div class="b" style="left:-2.0px;top:1371.5px;width:632.0px;height:28.5px;background:#dfdfdf;border:1px solid #2a2a2a;border-top-right-radius:6px;box-sizing:border-box;box-shadow:0 -2px 10px rgba(0,0,0,.06);"></div><div class="t" style="left:7.0px;top:1381.0px;font-size:25.6px;color:#6b6b6b;font-weight:400;">laravel.local/roles-deleted</div>
</div></body></html>
